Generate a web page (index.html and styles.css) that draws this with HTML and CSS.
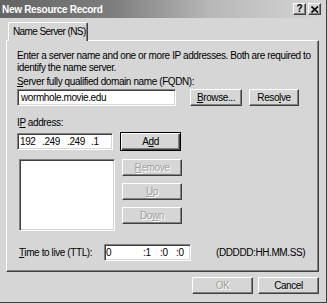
FILE: index.html
```html
<!DOCTYPE html>
<html>
<head>
<meta charset="utf-8">
<link rel="stylesheet" href="styles.css">
</head>
<body>
<div class="window">
  <div class="titlebar">
    <span class="title">New Resource Record</span>
    <div class="caption-buttons">
      <span class="cap-btn">?</span>
      <span class="cap-btn close">
        <svg width="8" height="7" viewBox="0 0 8 7"><path d="M0.5 0.5 L7 6.5 M7 0.5 L0.5 6.5" stroke="#000" stroke-width="1.6"/></svg>
      </span>
    </div>
  </div>
  <div class="content">
    <div class="tabs"><div class="tab">Name Server (NS)</div></div>
    <div class="panel">
      <p class="intro">Enter a server name and one or more IP addresses. Both are required to identify the name server.</p>
      <div class="label"><u>S</u>erver fully qualified domain name (FQDN):</div>
      <div class="row fqdn-row">
        <div class="field fqdn">wormhole.movie.edu</div>
        <div class="btn browse"><u>B</u>rowse...</div>
        <div class="btn resolve">Reso<u>l</u>ve</div>
      </div>
      <div class="label ip-label">I<u>P</u> address:</div>
      <div class="row ip-row">
        <div class="field ip"><span class="seg s1">192</span><span class="seg s2">.249</span><span class="seg s3">.249</span><span class="seg">.1</span></div>
        <div class="btn add">A<u>d</u>d</div>
      </div>
      <div class="row list-row">
        <div class="listbox"></div>
        <div class="btn-col">
          <div class="btn disabled"><u>R</u>emove</div>
          <div class="btn disabled"><u>U</u>p</div>
          <div class="btn disabled">Do<u>w</u>n</div>
        </div>
      </div>
      <div class="row ttl-row">
        <div class="ttl-label"><u>T</u>ime to live (TTL):</div>
        <div class="field ttl"><span class="t1">0</span><span class="t2">:1</span><span class="t3">:0</span><span>:0</span></div>
        <div class="fmt">(DDDDD:HH.MM.SS)</div>
      </div>
    </div>
    <div class="footer">
      <div class="btn disabled ok">OK</div>
      <div class="btn cancel">Cancel</div>
    </div>
  </div>
</div>
</body>
</html>
```

FILE: styles.css
```css
* { box-sizing: border-box; }
html, body { margin: 0; padding: 0; background: #d6d6d6; }
body {
  font-family: "Liberation Sans", Arial, sans-serif;
  font-size: 10px;
  letter-spacing: -0.4px;
  color: #000;
}
.window {
  width: 327px;
  height: 303px;
  background: #d6d6d6;
  border-right: 1px solid #404040;
  border-bottom: 1px solid #404040;
}
.titlebar {
  height: 18px;
  background: linear-gradient(to right, #646464 0%, #7e7e7e 35%, #b8b8b8 65%, #d6d6d6 100%);
  display: flex;
  align-items: center;
  justify-content: space-between;
  padding: 0 5px 0 2px;
}
.title {
  color: #fff;
  font-weight: bold;
  font-size: 10px;
  letter-spacing: -0.3px;
}
.caption-buttons { display: flex; gap: 2px; }
.cap-btn {
  width: 13px;
  height: 12px;
  background: #d6d6d6;
  border-top: 1px solid #fff;
  border-left: 1px solid #fff;
  border-right: 1px solid #404040;
  border-bottom: 1px solid #404040;
  box-shadow: inset -1px -1px 0 #808080;
  font-weight: bold;
  font-size: 10px;
  letter-spacing: 0;
  display: flex;
  align-items: center;
  justify-content: center;
  line-height: 1;
}
.content { padding: 4px 8px 0 6px; }
.tabs { display: flex; padding-left: 2px; height: 18px; position: relative; z-index: 1; }
.tab {
  width: 80px;
  height: 19px;
  background: #d6d6d6;
  border-top: 1px solid #fff;
  border-left: 1px solid #fff;
  border-right: 1px solid #404040;
  box-shadow: inset -1px 0 0 #808080;
  border-radius: 2px 2px 0 0;
  padding: 3px 0 0 4px;
  white-space: nowrap;
  letter-spacing: -0.6px;
}
.panel {
  width: 313px;
  height: 232px;
  border-top: 1px solid #fff;
  border-left: 1px solid #fff;
  border-right: 1px solid #404040;
  border-bottom: 1px solid #404040;
  box-shadow: inset -1px -1px 0 #808080;
  padding: 9px 0 0 10px;
}
.intro { margin: 0; line-height: 12px; width: 296px; }
.label { margin-top: 2px; line-height: 12px; }
.row { display: flex; }
.fqdn-row { margin-top: 1px; height: 17px; }
.field {
  background: #fff;
  border-top: 1px solid #808080;
  border-left: 1px solid #808080;
  border-right: 1px solid #fff;
  border-bottom: 1px solid #fff;
  box-shadow: inset 1px 1px 0 #404040, inset -1px -1px 0 #d6d6d6;
  padding: 2px 0 0 3px;
  height: 17px;
  line-height: 12px;
  white-space: nowrap;
}
.fqdn { width: 159px; }
.btn {
  height: 17px;
  background: #d6d6d6;
  border-top: 1px solid #fff;
  border-left: 1px solid #fff;
  border-right: 1px solid #404040;
  border-bottom: 1px solid #404040;
  box-shadow: inset -1px -1px 0 #808080;
  display: flex;
  align-items: center;
  justify-content: center;
  line-height: 1;
}
.browse { width: 52px; margin-left: 14px; }
.resolve { width: 50px; margin-left: 7px; }
.ip-label { margin-top: 11px; }
.ip-row { margin-top: 3px; align-items: center; }
.ip { width: 96px; padding-left: 2px; }
.seg { display: inline-block; }
.s1 { width: 22px; }
.s2 { width: 25px; }
.s3 { width: 24px; }
.add {
  width: 61px;
  height: 19px;
  margin-left: 7px;
  border: 1px solid #000;
  box-shadow: inset 1px 1px 0 #fff, inset -1px -1px 0 #404040, inset -2px -2px 0 #808080;
}
.list-row { margin-top: 8px; }
.listbox {
  width: 96px;
  height: 72px;
  margin-left: 2px;
  background: #fff;
  border-top: 1px solid #808080;
  border-left: 1px solid #808080;
  border-right: 1px solid #fff;
  border-bottom: 1px solid #fff;
  box-shadow: inset 1px 1px 0 #404040, inset -1px -1px 0 #d6d6d6;
}
.btn-col {
  display: flex;
  flex-direction: column;
  gap: 7px;
  margin-left: 7px;
  width: 60px;
}
.btn-col .btn { height: 17px; }
.disabled { color: #a0a0a0; text-shadow: 1px 1px 0 #fff; }
.ttl-row { margin-top: 13px; align-items: center; }
.ttl-label { width: 87px; padding-left: 2px; }
.ttl { width: 87px; padding-left: 1px; }
.ttl span { display: inline-block; }
.t1 { width: 37px; }
.t2 { width: 17px; }
.t3 { width: 16px; }
.fmt { margin-left: 25px; }
.footer {
  display: flex;
  justify-content: flex-end;
  gap: 5px;
  margin-top: 5px;
  width: 313px;
}
.footer .btn { width: 61px; height: 17px; }
```
